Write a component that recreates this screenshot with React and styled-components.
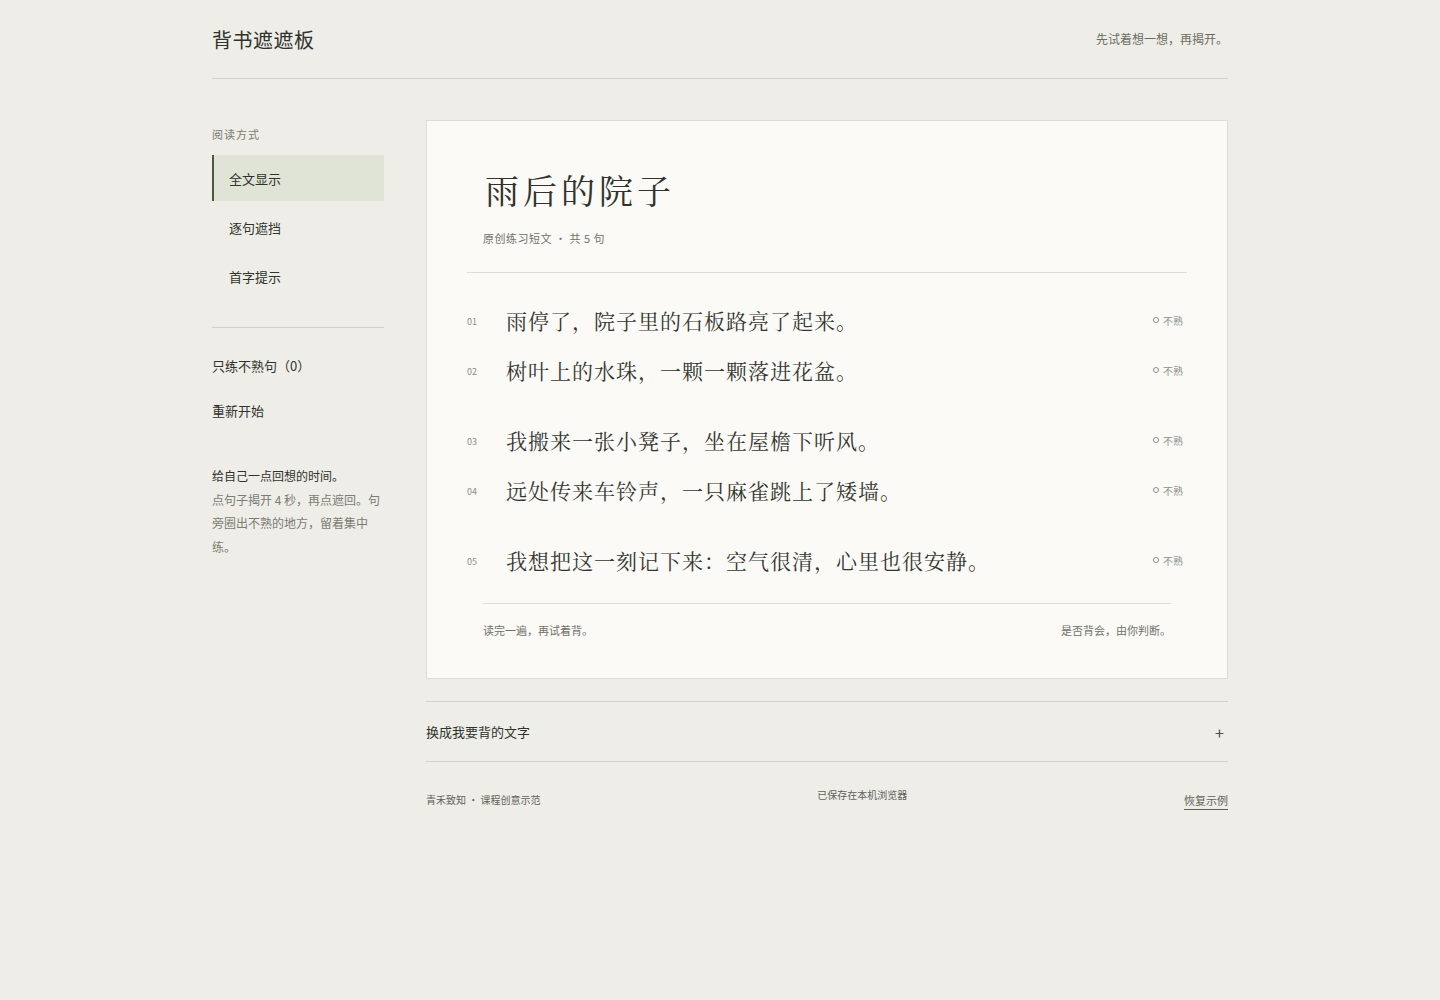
import React from "react";
import styled, { createGlobalStyle } from "styled-components";

const Global = createGlobalStyle`
  html, body { margin: 0; background: #eeede8; }
  body { font-family: "Noto Sans CJK SC", "Noto Sans", sans-serif; color: #2f332c; }
`;
const SERIF = `"Noto Serif CJK SC", "Source Han Serif SC", "AR PL UMing CN", "Liberation Serif", "Noto Sans CJK SC", serif`;

const Page = styled.div`width: 1016px; margin: 0 auto;`;
const Header = styled.header`
  height: 78px; display: flex; align-items: center; justify-content: space-between;
  border-bottom: 1px solid #d2d1cb;
`;
const Brand = styled.div`font-size: 20px; letter-spacing: 0.5px; color: #2f332c;`;
const Tagline = styled.div`font-size: 12px; color: #6a6d63; padding-bottom: 2px;`;
const Body = styled.div`display: grid; grid-template-columns: 172px 1fr; gap: 42px; padding-top: 41px;`;
const Side = styled.aside`display: flex; flex-direction: column; padding-top: 6px;`;
const SideLabel = styled.div`font-size: 11px; color: #7a7d73; letter-spacing: 1px; margin-bottom: 13px;`;
const Mode = styled.div`
  height: 46px; display: flex; align-items: center; padding-left: 15px; font-size: 13px; margin-bottom: 3px;
  border-left: 2px solid ${p => (p.$active ? "#4b5a3c" : "transparent")};
  background: ${p => (p.$active ? "#e0e4d6" : "transparent")};
  color: #2f332c;
`;
const SideRule = styled.div`border-top: 1px solid #d2d1cb; margin: 25px 0 28px;`;
const SideAction = styled.div`font-size: 13px; color: #2f332c; margin-bottom: 26px;`;
const Note = styled.div`font-size: 12px; line-height: 23.5px; color: #7a7d73; margin-top: 18px;
  strong { color: #2f332c; font-weight: 400; display: block; }`;
const Main = styled.main``;
const Card = styled.section`background: #fbfaf7; border: 1px solid #dddcd6; padding: 44px 40px 40px;`;
const Title = styled.h1`font-family: ${SERIF}; font-weight: 400; font-size: 34px; letter-spacing: 4px; margin: 0 0 0 18px; color: #2f332c;`;
const Meta = styled.div`font-size: 11px; color: #6f7269; margin: 16px 0 26px 16px; letter-spacing: 0.5px;`;
const Rule = styled.div`border-top: 1px solid #dddcd6;`;
const Rows = styled.div`padding-top: 22px; padding-bottom: 18px;`;
const Row = styled.div`
  display: flex; align-items: center; height: 50px; margin-top: ${p => (p.$gap ? "20px" : "0")};
`;
const Num = styled.span`width: 39px; font-size: 9px; color: #8c8f86; padding-top: 2px;`;
const Sentence = styled.span`flex: 1; font-family: ${SERIF}; font-size: 21px; letter-spacing: 1px; color: #33362f;`;
const Tag = styled.span`font-size: 10px; color: #8c8f86; margin-right: 4px; display: flex; align-items: center; gap: 4px;
  &::before { content: ""; width: 4px; height: 4px; border: 1px solid #8c8f86; border-radius: 50%; }`;
const CardFoot = styled.div`margin: 0 16px; border-top: 1px solid #dddcd6; padding-top: 18px;
  display: flex; justify-content: space-between; font-size: 11px; color: #6f7269;`;
const Expander = styled.div`margin-top: 22px; border-top: 1px solid #d2d1cb; border-bottom: 1px solid #d2d1cb;
  height: 59px; display: flex; align-items: center; justify-content: space-between; font-size: 13px; color: #2f332c;
  span:last-child { font-size: 16px; color: #4b4e46; margin-right: 4px; }`;
const Footer = styled.footer`display: flex; justify-content: space-between; align-items: flex-start; padding-top: 30px; font-size: 10px; color: #5f625a;`;
const Center = styled.span`margin-top: -5px;`;
const Link = styled.span`font-size: 11px; border-bottom: 1px solid #5f625a; padding-bottom: 1px;`;

const rows = [
  ["01", "雨停了，院子里的石板路亮了起来。", false],
  ["02", "树叶上的水珠，一颗一颗落进花盆。", false],
  ["03", "我搬来一张小凳子，坐在屋檐下听风。", true],
  ["04", "远处传来车铃声，一只麻雀跳上了矮墙。", false],
  ["05", "我想把这一刻记下来：空气很清，心里也很安静。", true],
];

export default function App() {
  return (
    <Page>
      <Global />
      <Header>
        <Brand>背书遮遮板</Brand>
        <Tagline>先试着想一想，再揭开。</Tagline>
      </Header>
      <Body>
        <Side>
          <SideLabel>阅读方式</SideLabel>
          <Mode $active>全文显示</Mode>
          <Mode>逐句遮挡</Mode>
          <Mode>首字提示</Mode>
          <SideRule />
          <SideAction>只练不熟句（0）</SideAction>
          <SideAction>重新开始</SideAction>
          <Note>
            <strong>给自己一点回想的时间。</strong>
            点句子揭开 4 秒，再点遮回。句旁圈出不熟的地方，留着集中练。
          </Note>
        </Side>
        <Main>
          <Card>
            <Title>雨后的院子</Title>
            <Meta>原创练习短文 · 共 5 句</Meta>
            <Rule />
            <Rows>
              {rows.map(([n, t, g]) => (
                <Row key={n} $gap={g}>
                  <Num>{n}</Num>
                  <Sentence>{t}</Sentence>
                  <Tag>不熟</Tag>
                </Row>
              ))}
            </Rows>
            <CardFoot>
              <span>读完一遍，再试着背。</span>
              <span>是否背会，由你判断。</span>
            </CardFoot>
          </Card>
          <Expander>
            <span>换成我要背的文字</span>
            <span>+</span>
          </Expander>
          <Footer>
            <span>青禾致知 · 课程创意示范</span>
            <Center>已保存在本机浏览器</Center>
            <Link>恢复示例</Link>
          </Footer>
        </Main>
      </Body>
    </Page>
  );
}
